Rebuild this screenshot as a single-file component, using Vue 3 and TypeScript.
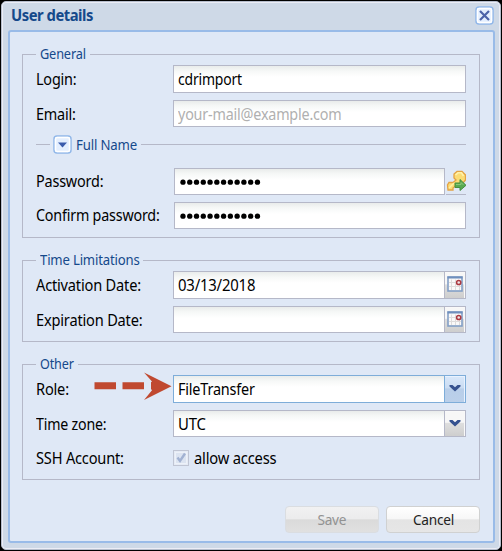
<script setup lang="ts">
import { ref } from 'vue'

const login = ref('cdrimport')
const email = ref('')
const activation = ref('03/13/2018')
const expiration = ref('')
const role = ref('FileTransfer')
const zone = ref('UTC')
const dots = 12
</script>

<template>
  <div class="screen">
    <div class="window">
      <header class="title">
        <h1>User details</h1>
        <svg class="tool" width="19" height="19" viewBox="0 0 19 19">
          <rect x="1" y="1" width="17" height="17" rx="3" fill="#e4efff" stroke="#91b7e9" stroke-width="1.5" />
          <rect x="2.5" y="2.5" width="14" height="14" rx="1.5" fill="none" stroke="#fff" stroke-width="1.5" />
          <path d="M5 5L14 14M14 5L5 14" stroke="#4c63a9" stroke-width="2.2" />
        </svg>
      </header>
      <main class="panel">
        <fieldset class="general">
          <legend class="t-general"><span>General</span></legend>
          <div class="row tall">
            <label class="t-login">Login:</label>
            <div class="field"><span class="t-cdr">{{ login }}</span></div>
          </div>
          <div class="row">
            <label class="t-email">Email:</label>
            <div class="field"><span class="hint">{{ email || 'your-mail@example.com' }}</span></div>
          </div>
          <div class="divider">
            <svg width="19" height="19" viewBox="0 0 19 19">
              <rect x="1" y="1" width="17" height="17" rx="3" fill="#e4efff" stroke="#91b7e9" stroke-width="1.5" />
              <rect x="2.5" y="2.5" width="14" height="14" rx="1.5" fill="none" stroke="#fff" stroke-width="1.5" />
              <path d="M5 7.5H14L9.5 12.5Z" fill="#3b5cad" />
            </svg>
            <span class="t-full">Full Name</span>
          </div>
          <div class="row">
            <label class="t-password">Password:</label>
            <div class="field secret">
              <svg width="86" height="10" viewBox="0 0 86 10"><circle v-for="n in dots" :key="n" :cx="n * 6.77 - 3.8" cy="5.2" r="2.65" /></svg>
            </div>
            <svg class="key" width="20" height="27" viewBox="0 0 20 27">
              <path d="M8 10L8 6L11 3.5H16L19.5 7V12L16 16H12L7 20V22H2L1.5 17L3 14.5H7L10 12Z" fill="#fbdc75" stroke="#e3a345" stroke-width="1.3" />
              <path d="M9.5 7L12 4.8H15.5L17.5 8" fill="none" stroke="#fff2aa" stroke-width="1.6" />
              <path d="M3 20L8 15" stroke="#fff0a0" stroke-width="1.5" />
              <path d="M9 15H14V11.5L20 17.3L14 22.5V19.5H9Z" fill="#58aa51" stroke="#459141" />
              <path d="M10 16.5H15V14.5L17.5 17" fill="none" stroke="#8bc879" />
              <path d="M0 26.5H20" stroke="#b5b8c8" />
            </svg>
          </div>
          <div class="row">
            <label class="t-confirm">Confirm password:</label>
            <div class="field secret">
              <svg width="86" height="10" viewBox="0 0 86 10"><circle v-for="n in dots" :key="n" :cx="n * 6.77 - 3.8" cy="5.2" r="2.65" /></svg>
            </div>
          </div>
        </fieldset>

        <fieldset class="time">
          <legend class="t-time"><span>Time Limitations</span></legend>
          <div v-for="(d, i) in [activation, expiration]" :key="i" class="row" :class="{ tall: i === 0 }">
            <label class="t-period">{{ i ? 'Expiration Date:' : 'Activation Date:' }}</label>
            <div class="field"><span class="t-date">{{ d }}</span>
              <i class="trigger">
                <svg width="16" height="16" viewBox="0 0 16 16">
                  <rect x="1" y="1" width="14" height="14" fill="#faf9f9" stroke="#839fc6" stroke-width="1.6" />
                  <path d="M0.5 1.5H15.5" stroke="#6f8fbd" stroke-width="2" />
                  <path d="M4.5 3.5V14M8.5 3.5V14M12.5 9V14M2 6.5H10M2 10.5H14" stroke="#dedcdc" />
                  <circle cx="11.7" cy="6.5" r="2.1" fill="#eee3e3" stroke="#ac3941" stroke-width="1.5" />
                </svg>
              </i>
            </div>
          </div>
        </fieldset>

        <fieldset class="other">
          <legend class="t-other"><span>Other</span></legend>
          <div class="row tall">
            <label class="t-role">Role:</label>
            <svg class="arrow" width="78" height="28" viewBox="0 0 78 28">
              <path d="M.5 10.2H22V17.2H.5ZM28.5 10.2H50V17.2H28.5ZM57 10.2L58 9.5L50 .5L77.5 14.3L50 28L58 18.2L57 17Z" fill="#c04930" />
            </svg>
            <div class="field focus"><span class="t-file">{{ role }}</span>
              <i class="trigger"><svg width="12" height="8" viewBox="0 0 12 8"><path d="M.5 1H3.5L6 3.2L8.5 1H11.5V2.5L6 7.5L.5 2.5Z" fill="#35518f" /></svg></i>
            </div>
          </div>
          <div class="row">
            <label class="t-zone">Time zone:</label>
            <div class="field"><span class="t-utc">{{ zone }}</span>
              <i class="trigger"><svg width="12" height="8" viewBox="0 0 12 8"><path d="M.5 1H3.5L6 3.2L8.5 1H11.5V2.5L6 7.5L.5 2.5Z" fill="#35518f" /></svg></i>
            </div>
          </div>
          <div class="row">
            <label class="t-ssh">SSH Account:</label>
            <svg class="check" width="16" height="16" viewBox="0 0 16 16">
              <rect x=".5" y=".5" width="15" height="15" fill="#e5ebf5" stroke="#c0c5d3" />
              <rect x="2.5" y="2.5" width="11" height="11" fill="#dce4f1" stroke="#edf1f8" />
              <path d="M4.5 7.5L7 11L12 3.5" fill="none" stroke="#a2b2d2" stroke-width="2.4" />
            </svg>
            <span class="t-allow">allow access</span>
          </div>
        </fieldset>

        <footer>
          <button class="disabled" disabled><span class="t-save">Save</span></button>
          <button><span class="t-cancel">Cancel</span></button>
        </footer>
      </main>
    </div>
  </div>
</template>

<style>
body { margin: 0; }
</style>

<style scoped>
* { box-sizing: border-box; }
.screen { width: 502px; height: 551px; background: #000; padding: 1px; font: 15.5px/20px "Noto Sans", sans-serif; letter-spacing: -.2px; color: #000; }
.window { height: 549px; border: 1px solid #b5bdcc; border-radius: 5px; background: #ced9e7; box-shadow: inset 0 0 0 1px #ebedf6; padding: 0 5px 6px 6px; }
.title { height: 28px; display: flex; align-items: center; justify-content: space-between; padding: 0 1px 2px 3px; }
h1 { font-size: 15.5px; line-height: 20px; margin: 0; color: #15498b; letter-spacing: -.5px; transform: scaleX(.955); transform-origin: left; }
.tool { margin-top: 1px; }
.panel { height: 513px; border: 2px solid #99bbe8; border-radius: 3px; background: #dfe8f6; padding: 13px 13px 0 12px; }
fieldset { min-width: 0; margin: 0; border: 1px solid #b5b8c8; padding: 2px 13px 0; }
legend { height: 18px; line-height: 16px; padding: 0 4px; color: #15498b; white-space: nowrap; font-size: 15.2px; }
legend span { display: inline-block; transform-origin: left; }
.t-general { width: 54px; }
.t-general span { transform: scaleX(.84); }
.t-time { width: 107px; }
.t-time span { transform: scaleX(.865); }
.t-other { width: 42px; }
.t-other span { transform: scaleX(.83); }
.general { height: 193px; }
.time { height: 91px; margin-top: 13px; }
.other { height: 125px; margin-top: 13px; }
.row { height: 27px; margin-bottom: 7px; display: flex; align-items: center; white-space: nowrap; }
.row.tall { height: 28px; }
label { flex: 0 0 137px; transform: scaleX(.93); transform-origin: left; }
.t-password, .t-confirm { margin-top: -1px; }
.t-confirm { transform: scaleX(.922); }
.t-period, .t-role, .t-ssh { transform: scaleX(.942); }
.t-zone { transform: scaleX(.915); }
.field { flex: 1; height: 100%; min-width: 0; display: flex; align-items: center; justify-content: space-between; border: 1px solid #b5b8c8; background: linear-gradient(#e9eceb, #f6f8f7 5px, #fff 11px); padding-left: 4px; }
.field span, .t-allow { transform: scaleX(.93); transform-origin: left; }
.t-allow { transform: scaleX(.95); }
.field .t-cdr { transform: scaleX(.9); }
.field .t-date, .field .t-utc { transform: scaleX(.96); }
.field .hint { color: #b0b0b0; transform: scaleX(.925); }
.secret { margin-left: 1px; padding-left: 5px; }
.key { margin-left: 1px; }
.trigger { width: 21px; height: 100%; border-left: 1px solid #b5b8c8; box-shadow: inset -1px 1px #f9f9f9; background: linear-gradient(#f7f7f7 45%, #dedede 50%, #cecece); display: flex; align-items: center; justify-content: center; padding-bottom: 2px; }
.focus { border-color: #7eadd9; }
.focus .trigger { border-color: #7eadd9; background: linear-gradient(#d9e8fa, #cadcf2 45%, #b8cee9 50%, #bbd0ea); box-shadow: inset -1px 1px #e8f2ff; }
.divider { height: 19px; margin: 8px 0 14px; display: flex; align-items: center; color: #15498b; }
.divider::before { content: ""; width: 14px; height: 1px; background: #b5b8c8; margin-right: 3px; }
.divider::after { content: ""; flex: 1; height: 1px; background: #b5b8c8; margin-left: 5px; }
.t-full { width: 60px; margin: -2px 0 0 4px; font-size: 15.2px; white-space: nowrap; transform: scaleX(.87); transform-origin: left; }
.t-role { flex-basis: 58px; }
.arrow { margin: -6px 1px 0 0; }
.check { margin-right: 5px; }
footer { display: flex; justify-content: flex-end; gap: 7px; margin-top: 26px; }
button { width: 94px; height: 27px; padding: 0 0 2px; border: 1px solid #d0d1d1; border-radius: 4px; background: linear-gradient(#fff, #f7f7f7 46%, #e4e4e4 52%, #e6e6e6); font: inherit; font-size: 15px; line-height: 20px; letter-spacing: -.3px; color: #222; }
button span { display: inline-block; transform: scaleX(.91); }
.disabled { border-color: #dadde1; background: linear-gradient(#f1f1f2, #ececed 46%, #dadada 52%, #e0e0e0); color: #929292; }
</style>
